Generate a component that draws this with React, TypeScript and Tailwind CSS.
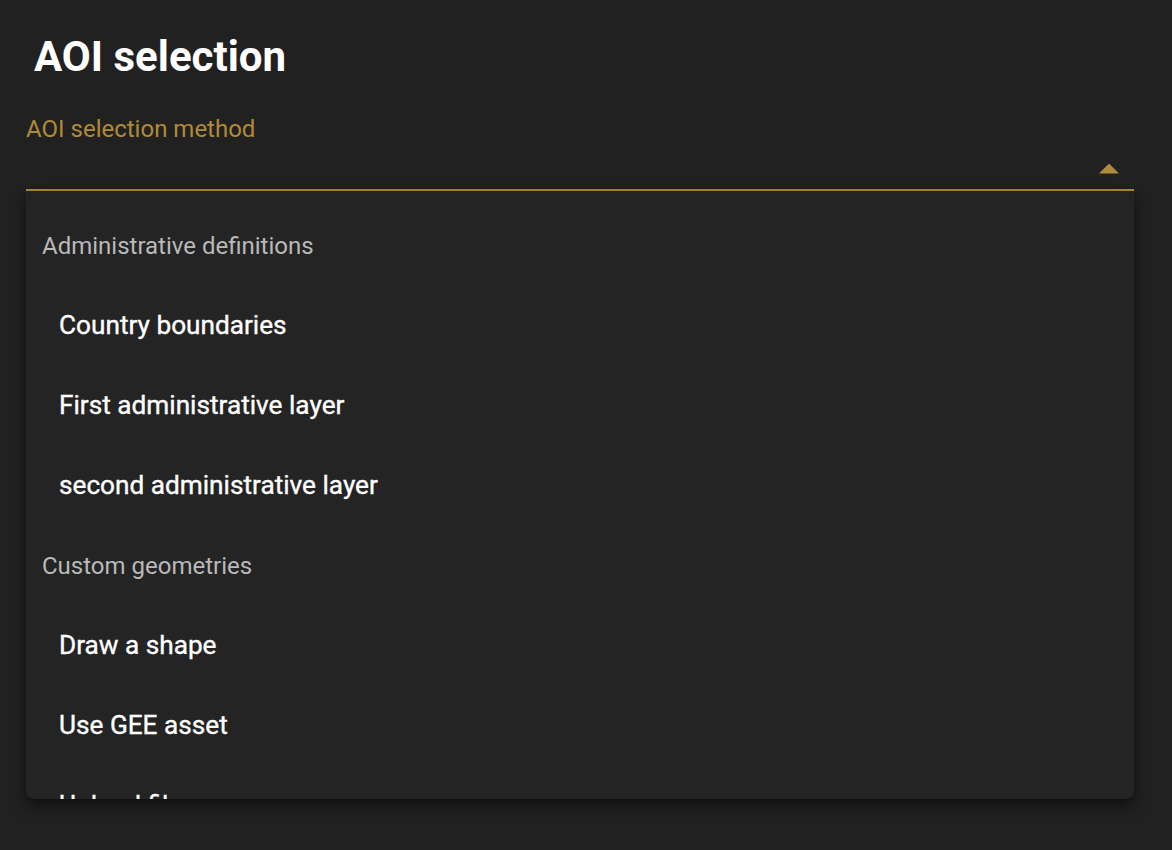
import React from "react";

const groups = [
  {
    header: "Administrative definitions",
    items: ["Country boundaries", "First administrative layer", "second administrative layer"],
  },
  {
    header: "Custom geometries",
    items: ["Draw a shape", "Use GEE asset", "Upload file"],
  },
];

export default function App() {
  return (
    <div
      className="w-[1172px] h-[850px] bg-[#212121] overflow-hidden"
      style={{ fontFamily: "Roboto, 'Noto Sans', sans-serif" }}
    >
      <div className="pl-[34px] pt-[31px]">
        <h1 className="text-[42px] leading-[52px] font-bold text-white">AOI selection</h1>
      </div>
      <div className="ml-[26px] w-[1108px] mt-[31px] relative">
        <div className="text-[24px] leading-[30px] text-[#b08a3c]">AOI selection method</div>
        <div className="h-[45px] flex items-center justify-end pr-[15px] pt-[3px]">
          <svg width="20" height="11" viewBox="0 0 20 11">
            <polygon points="0,10.5 10,0.5 20,10.5" fill="#b08a3c" />
          </svg>
        </div>
        <div className="h-[2px] bg-[#b08a3c]" />
        <div className="absolute left-0 right-0 top-full h-[608px] bg-[#242424] rounded-b-[8px] overflow-hidden shadow-[0_8px_16px_rgba(0,0,0,0.35),0_4px_8px_rgba(0,0,0,0.25)] pt-[15px]">
          {groups.map((g) => (
            <div key={g.header}>
              <div className="h-[80px] flex items-center pl-[16px] text-[24px] text-[#b9b9b9]">
                {g.header}
              </div>
              {g.items.map((it) => (
                <div
                  key={it}
                  className="h-[80px] flex items-center pl-[33px] text-[26.2px] font-normal text-white [-webkit-text-stroke:0.35px_#ffffff]"
                >
                  {it}
                </div>
              ))}
            </div>
          ))}
        </div>
      </div>
    </div>
  );
}
